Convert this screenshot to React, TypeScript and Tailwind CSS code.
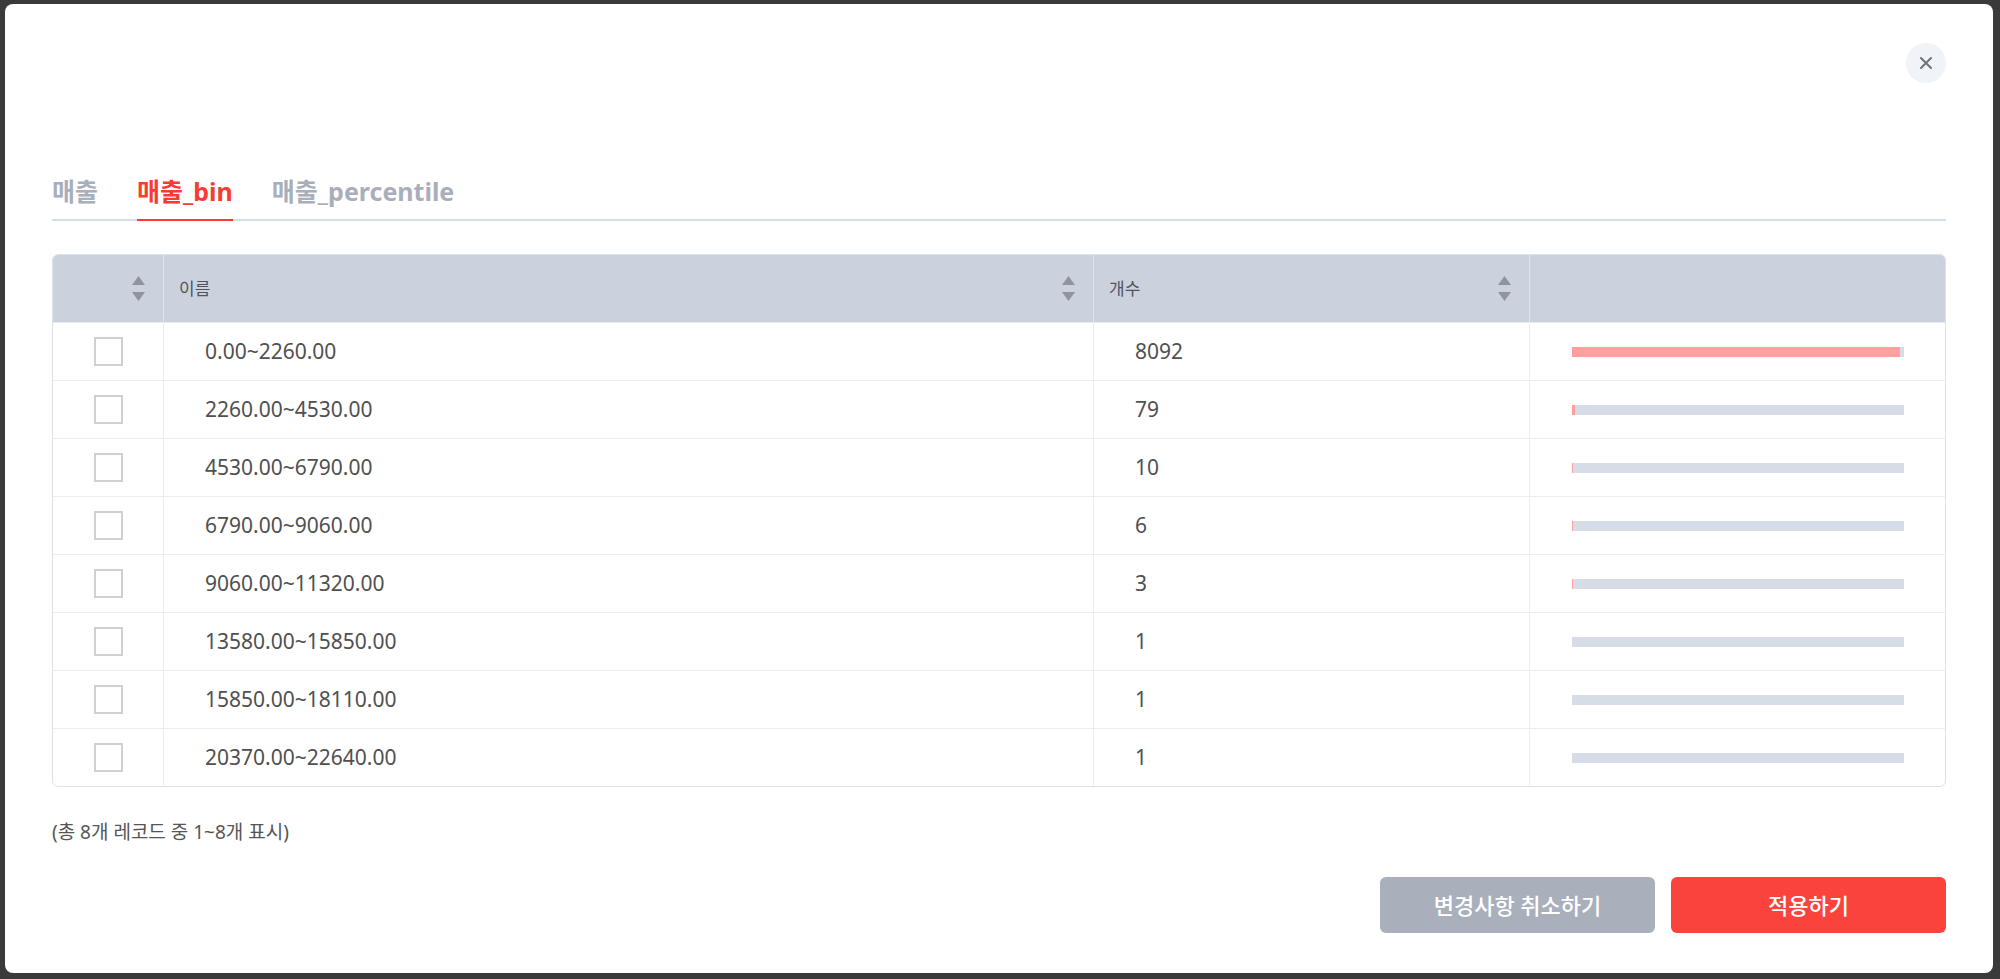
import React from "react";

const rows = [
  { range: "0.00~2260.00", count: 8092 },
  { range: "2260.00~4530.00", count: 79 },
  { range: "4530.00~6790.00", count: 10 },
  { range: "6790.00~9060.00", count: 6 },
  { range: "9060.00~11320.00", count: 3 },
  { range: "13580.00~15850.00", count: 1 },
  { range: "15850.00~18110.00", count: 1 },
  { range: "20370.00~22640.00", count: 1 },
];

const total = rows.reduce((sum, r) => sum + r.count, 0);

function SortIcon() {
  return (
    <svg width="13" height="25" viewBox="0 0 13 25" className="shrink-0">
      <path d="M6.5 0 13 9H0z" fill="#8f949e" />
      <path d="M0 16h13l-6.5 9z" fill="#8f949e" />
    </svg>
  );
}

function Tab({ label, active = false }: { label: string; active?: boolean }) {
  return (
    <div
      className={`pb-[10px] -mb-[2px] border-b-2 text-[25px] leading-[36px] font-bold ${
        active ? "border-[#fb3a33] text-[#fb3a33]" : "border-transparent text-[#a9aebb]"
      }`}
    >
      {label}
    </div>
  );
}

export default function App() {
  return (
    <div className="w-[2000px] h-[979px] bg-[#3a3a3a] pt-[4px] pl-[5px] font-['Noto_Sans','Noto_Sans_CJK_KR',sans-serif]">
      <div className="w-[1988px] h-[969px] bg-white rounded-[8px] px-[47px] pt-[39px] pb-[40px] flex flex-col">
        {/* close */}
        <div className="flex justify-end h-[40px]">
          <button className="w-10 h-10 rounded-full bg-[#f0f3f7] flex items-center justify-center">
            <svg width="14" height="14" viewBox="0 0 14 14" stroke="#6e727b" strokeWidth="2" strokeLinecap="round">
              <path d="M2 2l10 10M12 2 2 12" />
            </svg>
          </button>
        </div>

        {/* tabs */}
        <div className="mt-[90px] flex gap-[39px] border-b-2 border-[#d8dee7]">
          <Tab label="매출" />
          <Tab label="매출_bin" active />
          <Tab label="매출_percentile" />
        </div>

        {/* table */}
        <div className="mt-[33px] border border-[#dde2ea] rounded-[6px] overflow-hidden">
          <div className="flex h-[67px] bg-[#cbd2de] text-[17px] text-[#50545c]">
            <div className="w-[111px] flex items-center justify-end pr-[18px] border-r border-[#dfe4eb]">
              <SortIcon />
            </div>
            <div className="w-[930px] flex items-center justify-between pl-[15px] pr-[18px] border-r border-[#dfe4eb]">
              <span>이름</span>
              <SortIcon />
            </div>
            <div className="w-[436px] flex items-center justify-between pl-[15px] pr-[18px] border-r border-[#dfe4eb]">
              <span>개수</span>
              <SortIcon />
            </div>
            <div className="flex-1" />
          </div>
          {rows.map((r) => (
            <div key={r.range} className="flex h-[58px] border-t border-[#ededed] text-[21px] text-[#505050]">
              <div className="w-[111px] flex items-center justify-center border-r border-[#ededed]">
                <div className="w-[29px] h-[29px] border-2 border-[#d0d0d0] bg-white" />
              </div>
              <div className="w-[930px] flex items-center pl-[41px] border-r border-[#ededed]">{r.range}</div>
              <div className="w-[436px] flex items-center pl-[41px] border-r border-[#ededed]">{r.count}</div>
              <div className="flex-1 flex items-center pl-[42px] pr-[41px]">
                <div className="flex-1 h-[10px] bg-[#d6dde7]">
                  <div className="h-full bg-[#fea0a0]" style={{ width: `${(r.count / total) * 100}%` }} />
                </div>
              </div>
            </div>
          ))}
        </div>

        <div className="mt-[32px] text-[19px] leading-[26px] text-[#555555]">(총 8개 레코드 중 1~8개 표시)</div>

        <div className="mt-[32px] flex justify-end gap-[16px]">
          <button className="w-[275px] h-[56px] rounded-[6px] bg-[#a9afbb] text-white text-[22px] font-medium">
            변경사항 취소하기
          </button>
          <button className="w-[275px] h-[56px] rounded-[6px] bg-[#fb433d] text-white text-[22px] font-medium">
            적용하기
          </button>
        </div>
      </div>
    </div>
  );
}
